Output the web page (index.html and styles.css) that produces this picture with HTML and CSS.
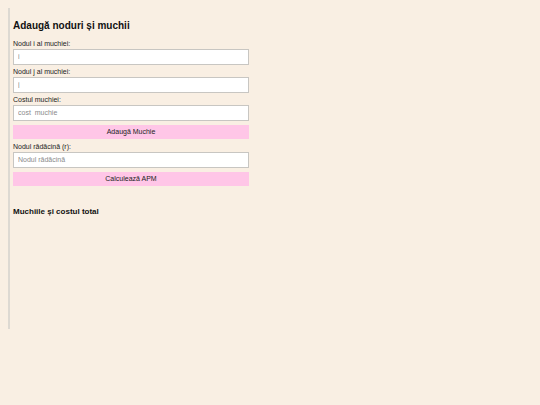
FILE: index.html
```html
<!DOCTYPE html>
<html lang="ro">
<head>
<meta charset="utf-8">
<title>APM</title>
<link rel="stylesheet" href="styles.css">
</head>
<body>
<div class="panel">
  <h3 class="title">Adaugă noduri și muchii</h3>
  <label class="lbl lbl-first" for="ni">Nodul i al muchiei:</label>
  <input class="field" id="ni" type="text" placeholder="i">
  <label class="lbl" for="nj">Nodul j al muchiei:</label>
  <input class="field" id="nj" type="text" placeholder="j">
  <label class="lbl" for="cm">Costul muchiei:</label>
  <input class="field" id="cm" type="text" placeholder="cost_muchie">
  <button class="btn" type="button">Adaugă Muchie</button>
  <label class="lbl lbl-after" for="nr">Nodul rădăcină (r):</label>
  <input class="field" id="nr" type="text" placeholder="Nodul rădăcină">
  <button class="btn" type="button">Calculează APM</button>
  <h4 class="subtitle">Muchiile și costul total</h4>
</div>
</body>
</html>
```
FILE: styles.css
```css
html, body {
  background: #f9efe3;
}
body {
  margin: 8px;
  font-family: "Liberation Sans", Arial, sans-serif;
  color: #111;
}
.panel {
  width: 236px;
  height: 309px;
  border-left: 2px solid #ddd9d2;
  padding: 12px 0 0 3px;
  display: flex;
  flex-direction: column;
}
.title {
  margin: 0 0 6.5px;
  font-size: 10px;
  line-height: 12px;
  font-weight: bold;
}
.lbl {
  display: block;
  font-size: 7px;
  line-height: 10px;
  margin-top: 2px;
  color: #222;
}
.lbl-first {
  margin-top: 0;
}
.lbl-after {
  margin-top: 3px;
}
.field {
  box-sizing: border-box;
  width: 100%;
  height: 16px;
  margin: 0;
  padding: 0 4px;
  border: 1px solid #c8c6c2;
  background: #fff;
  font-family: "Liberation Sans", Arial, sans-serif;
  font-size: 7px;
  color: #333;
  outline: none;
}
.field::placeholder {
  color: #8a8a8a;
}
.btn {
  box-sizing: border-box;
  width: 100%;
  height: 14px;
  margin-top: 4px;
  padding: 0;
  border: none;
  background: #ffc6e7;
  font-family: "Liberation Sans", Arial, sans-serif;
  font-size: 7px;
  color: #222;
}
.subtitle {
  margin: 21px 0 0;
  font-size: 8px;
  line-height: 10px;
  font-weight: bold;
}
```
